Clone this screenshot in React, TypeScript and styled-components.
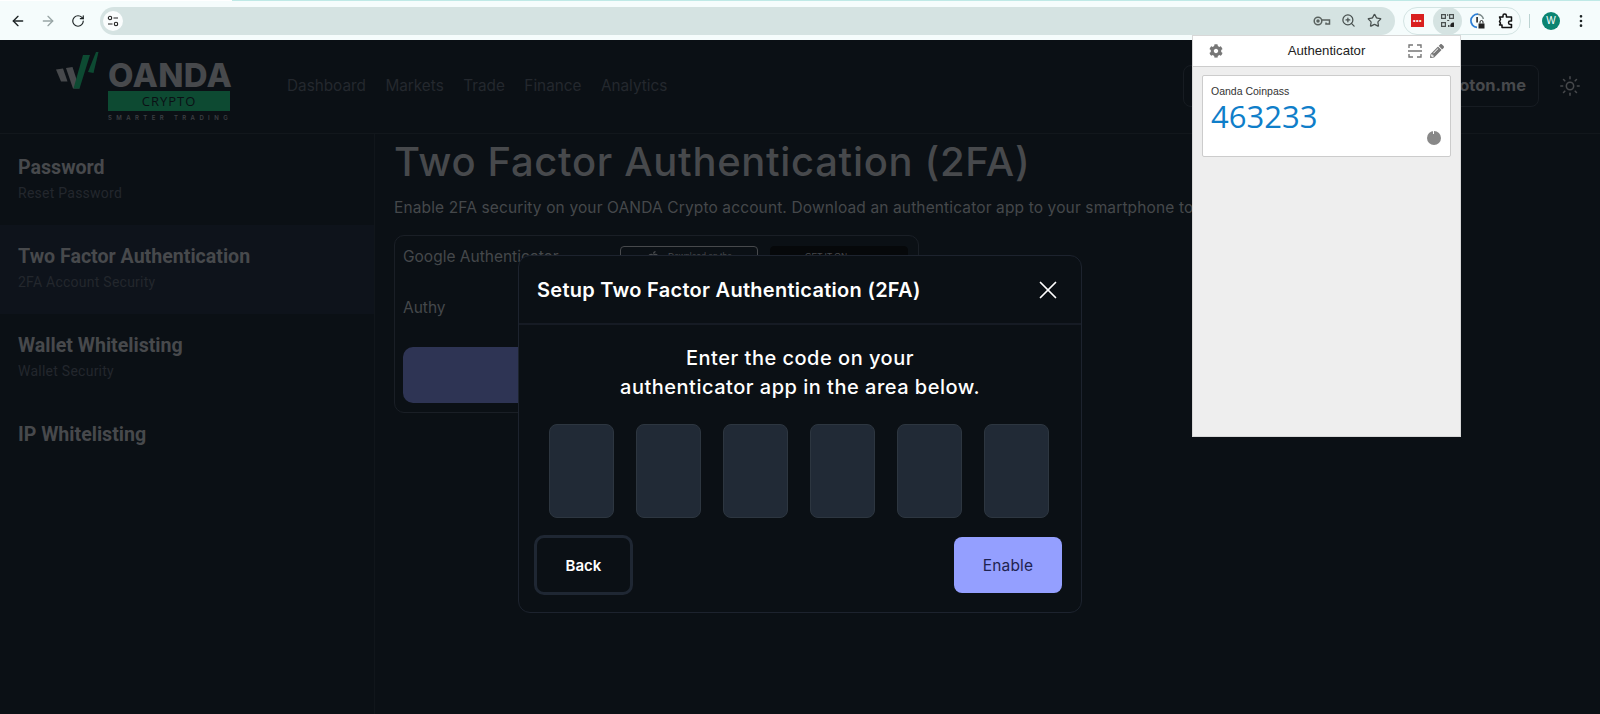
import styled, { createGlobalStyle } from "styled-components";
import { ArrowLeft, ArrowRight, RotateCw, ZoomIn, Star, EllipsisVertical, Sun, X } from "lucide-react";
import { FaApple, FaCog, FaPencilAlt } from "react-icons/fa";

const GlobalStyle = createGlobalStyle`
  html, body {
    margin: 0;
    width: 1600px;
    height: 714px;
    overflow: hidden;
    background: #0b1015;
  }
  * { box-sizing: border-box; }
`;

const display = `"Inter", "Open Sans", sans-serif`;

const Shell = styled.div`
  display: flex;
  flex-direction: column;
  width: 1600px;
  height: 714px;
  position: relative;
  overflow: hidden;
`;

/* browser chrome */
const BrowserBar = styled.div`
  height: 40px;
  flex: none;
  display: flex;
  align-items: center;
  padding: 1px 0 0 7px;
  background: linear-gradient(to right, #fff 232px, #bfe9e6 232px) top / 100% 1px no-repeat, #f5fcfc;
`;

const NavButton = styled.div<{ $dim?: boolean }>`
  width: 22px;
  height: 22px;
  margin-right: 8px;
  display: flex;
  align-items: center;
  justify-content: center;
  color: ${({ $dim }) => ($dim ? "#98a5a5" : "#1c2324")};
`;

const AddressBar = styled.div`
  width: 1295px;
  height: 28px;
  margin-left: 3px;
  padding: 0 8px 0 3px;
  display: flex;
  align-items: center;
  border-radius: 14px;
  background: #d5e3e2;
  color: #48504f;
`;

const SiteChip = styled.div`
  width: 20px;
  height: 20px;
  border-radius: 50%;
  background: #fafdfd;
  display: flex;
  align-items: center;
  justify-content: center;
`;

const AddressIcons = styled.div`
  margin-left: auto;
  display: flex;
  align-items: center;
  gap: 8px;
  padding-right: 4px;
`;

const IconSlot = styled.div`
  width: 18px;
  height: 18px;
  display: flex;
  align-items: center;
  justify-content: center;
`;

const ExtensionPill = styled.div`
  width: 118px;
  height: 28px;
  margin-left: 8px;
  display: flex;
  align-items: center;
  border: 1px solid #d3e4e3;
  border-radius: 14px;
`;

const ExtensionSlot = styled.div<{ $active?: boolean }>`
  width: 29px;
  height: 28px;
  flex: none;
  display: flex;
  align-items: center;
  justify-content: center;
  border-radius: 50%;
  background: ${({ $active }) => ($active ? "#d5e3e2" : "transparent")};
`;

const RedExtension = styled.div`
  width: 13px;
  height: 13px;
  margin-right: 2px;
  background: #d9201f;
  display: flex;
  align-items: center;
  justify-content: center;
  color: #fff;
  font: 700 7px/1 "Liberation Sans", sans-serif;
  letter-spacing: 0.5px;
`;

const BarDivider = styled.div`
  width: 1px;
  height: 14px;
  margin: 0 12px 0 8px;
  background: #bcd3d2;
`;

const Avatar = styled.div`
  width: 18px;
  height: 18px;
  border-radius: 50%;
  background: #0b8471;
  color: #fff;
  display: flex;
  align-items: center;
  justify-content: center;
  font: 400 10px/1 "Liberation Sans", sans-serif;
`;

const MenuSlot = styled.div`
  margin-left: 13px;
  display: flex;
  color: #1c2324;
`;

/* page behind the dialog */
const Header = styled.header`
  height: 94px;
  flex: none;
  display: flex;
  align-items: center;
  padding-left: 56px;
  border-bottom: 1px solid #12171c;
`;

const Logo = styled.div`
  width: 174px;
  display: flex;
  align-items: flex-start;
  gap: 4px;
`;

const LogoWords = styled.div`
  width: 122px;
  display: flex;
  flex-direction: column;
  margin-top: 11px;
`;

const LogoName = styled.div`
  font: 800 33px/27px ${display};
  color: #47494c;
  letter-spacing: 0.4px;
  white-space: nowrap;
`;

const LogoBand = styled.div`
  height: 20px;
  margin-top: 2px;
  background: #0d4a32;
  color: #0b1015;
  text-align: center;
  font: 400 13px/20px "Open Sans", sans-serif;
  letter-spacing: 1px;
`;

const LogoTag = styled.div`
  margin-top: 3px;
  font: 600 6px/8px ${display};
  letter-spacing: 4.4px;
  color: #3c3f43;
  white-space: nowrap;
`;

const Nav = styled.nav`
  margin-left: 57px;
  display: flex;
  gap: 19.5px;
  margin-top: -2px;
`;

const NavLink = styled.span`
  font: 400 15.3px/22px ${display};
  color: #24282e;
`;

const HeaderRight = styled.div`
  margin-left: auto;
  display: flex;
  align-items: center;
  margin-top: -2px;
`;

const UserBox = styled.div`
  width: 356px;
  height: 42px;
  padding-right: 12px;
  display: flex;
  align-items: center;
  justify-content: flex-end;
  border: 1px solid #171c22;
  border-radius: 8px;
  font: 700 16.5px/1 ${display};
  color: #47494c;
`;

const ThemeToggle = styled.div`
  width: 61px;
  display: flex;
  justify-content: center;
  color: #47494c;
`;

const Body = styled.div`
  flex: 1;
  display: flex;
`;

const Sidebar = styled.aside`
  width: 375px;
  flex: none;
  padding-top: 2px;
  border-right: 1px solid #11161b;
`;

const SideItem = styled.div<{ $active?: boolean }>`
  height: 89px;
  padding: 20px 18px 0;
  background: ${({ $active }) => ($active ? "#0e131b" : "transparent")};
`;

const SideTitle = styled.div`
  font: 700 19.6px/24px Roboto, sans-serif;
  color: #47494c;
`;

const SideSub = styled.div`
  margin-top: 3px;
  font: 400 14px/20px Roboto, sans-serif;
  letter-spacing: 0.25px;
  color: #23272d;
`;

const Main = styled.main`
  flex: 1;
  min-width: 0;
  padding-left: 19px;
`;

const PageTitle = styled.h1`
  margin: 0;
  font: 500 40px/56px ${display};
  letter-spacing: 0.67px;
  color: #47494c;
  white-space: nowrap;
`;

const PageLead = styled.p`
  margin: 6px 0 0;
  font: 400 15.5px/24px ${display};
  letter-spacing: 0.13px;
  color: #45484b;
  white-space: nowrap;
`;

const AppsCard = styled.section`
  width: 525px;
  height: 178px;
  margin-top: 15px;
  padding: 10px 8px;
  border: 1px solid #1a1f26;
  border-radius: 10px;
`;

const AppRow = styled.div<{ $height: number }>`
  height: ${({ $height }) => $height}px;
  display: flex;
  align-items: flex-start;
  gap: 12px;
`;

const AppName = styled.div`
  width: 205px;
  font: 400 15.5px/22px ${display};
  color: #45484b;
`;

const StoreBadge = styled.div<{ $dark?: boolean }>`
  width: 138px;
  height: 42px;
  padding: 3px ${({ $dark }) => ($dark ? "26px" : "0")} 0 0;
  display: flex;
  justify-content: center;
  gap: 8px;
  border: 1px solid ${({ $dark }) => ($dark ? "#06080a" : "#47494c")};
  border-radius: 4px;
  background: ${({ $dark }) => ($dark ? "#06080a" : "#0b1015")};
  color: #47494c;
  font: 400 8.5px/12px "Liberation Sans", sans-serif;
`;

const GhostButton = styled.div`
  height: 56px;
  border-radius: 10px;
  background: #2e3454;
`;

/* dialog */
const Modal = styled.section`
  position: absolute;
  left: 518px;
  top: 255px;
  width: 564px;
  height: 358px;
  border: 1px solid #1d232e;
  border-radius: 12px;
  background: #0b1015;
`;

const ModalHead = styled.div`
  height: 69px;
  padding: 0 18px 0 18px;
  display: flex;
  align-items: center;
  justify-content: space-between;
  border-bottom: 2px solid #161b24;
`;

const ModalTitle = styled.h2`
  margin: 0;
  font: 600 20px/1 ${display};
  letter-spacing: 0.28px;
  color: #fff;
`;

const CloseButton = styled.div`
  display: flex;
  color: #fff;
`;

const Prompt = styled.p`
  margin: 19px 0 0;
  text-align: center;
  font: 500 20px/29px ${display};
  letter-spacing: 0.5px;
  color: #fff;
`;

const CodeRow = styled.div`
  margin-top: 22px;
  display: flex;
  justify-content: center;
  gap: 21.7px;
  padding-right: 2px;
`;

const CodeCell = styled.div`
  width: 65.4px;
  height: 94px;
  border: 1px solid #2d3640;
  border-radius: 8px;
  background: #212a36;
`;

const ModalFoot = styled.div`
  margin-top: 17px;
  padding: 0 19px 0 15px;
  display: flex;
  align-items: center;
  justify-content: space-between;
`;

const BackButton = styled.div`
  width: 99px;
  height: 60px;
  display: flex;
  align-items: center;
  justify-content: center;
  border: 3px solid #1f2733;
  border-radius: 10px;
  font: 600 15px/1 ${display};
  color: #fff;
`;

const EnableButton = styled.div`
  width: 108px;
  height: 56px;
  padding-top: 1px;
  display: flex;
  align-items: center;
  justify-content: center;
  border-radius: 8px;
  background: #949fff;
  font: 400 15.5px/1 ${display};
  letter-spacing: 0.2px;
  color: #1f2350;
`;

/* extension popup */
const Popup = styled.section`
  position: absolute;
  left: 1192px;
  top: 35px;
  width: 269px;
  height: 402px;
  display: flex;
  flex-direction: column;
  border: 1px solid #d8d8d8;
  background: #eeeeee;
`;

const PopupHead = styled.div`
  height: 31px;
  flex: none;
  padding: 0 16px;
  display: grid;
  grid-template-columns: 1fr auto 1fr;
  align-items: center;
  border-bottom: 1px solid #cccccc;
  background: #fff;
  color: #777;
`;

const PopupTitle = styled.div`
  font: 400 13.2px/1 "Liberation Sans", sans-serif;
  color: #222;
`;

const PopupTools = styled.div`
  display: flex;
  align-items: center;
  justify-content: flex-end;
  gap: 8px;
`;

const TokenCard = styled.div`
  height: 82px;
  margin: 8px 9px;
  padding: 8px;
  position: relative;
  border: 1px solid #cccccc;
  border-radius: 2px;
  background: #fff;
`;

const TokenIssuer = styled.div`
  font: 400 10.5px/14px "Liberation Sans", sans-serif;
  color: #333;
`;

const TokenCode = styled.div`
  font: 400 31px/36px "Open Sans", sans-serif;
  color: #0f7ec9;
`;

const TokenTimer = styled.div`
  position: absolute;
  right: 9px;
  bottom: 11px;
  width: 14px;
  height: 14px;
  border-radius: 50%;
  background: conic-gradient(#888 0 98%, #fff 98%);
`;

const TuneIcon = () => (
  <svg width="12" height="12" viewBox="0 0 12 12" fill="none" stroke="#222" strokeWidth="1.1">
    <circle cx="3" cy="3" r="1.7" />
    <path d="M6.5 3H11M1 9h4.5" />
    <circle cx="9" cy="9" r="1.7" />
  </svg>
);

const KeyIcon = () => (
  <svg width="18" height="12" viewBox="0 0 18 12" fill="none" stroke="#59625f" strokeWidth="1.5">
    <circle cx="5" cy="6" r="3.8" />
    <circle cx="5" cy="6" r="1" fill="#59625f" />
    <path d="M9 5h7.5v4H13V7.5" />
  </svg>
);

const QrIcon = () => (
  <svg width="15" height="15" viewBox="0 0 15 15" fill="#4a504f">
    <path d="M1 1h5v5H1zM2.200 2.200v2.600h2.600V2.200zM9 1h5v5H9zM10.200 2.200v2.600h2.600V2.200zM1 9h5v5H1zM2.200 10.200v2.600h2.600v-2.600z" fillRule="evenodd" />
    <path d="M7.200 1h1v2h-1zM7.200 7h2v1h-2zM8 12h1.500v2H8z" />
    <path d="M10.500 14a3.200 3.200 0 0 1 3.500-4.500V14z" fill="#222" />
  </svg>
);

const TimerLockIcon = () => (
  <svg width="18" height="18" viewBox="0 0 18 18" fill="none">
    <path d="M10 2.200A6.600 6.600 0 1 0 9 15.400" stroke="#2c7fd6" strokeWidth="1.7" />
    <path d="M10 2.200A6.600 6.600 0 0 1 15.400 7" stroke="#7c8a8a" strokeWidth="1.5" />
    <path d="M8.300 5h1.600v5.500H8.300z" fill="#222" />
    <rect x="10.500" y="11.500" width="6" height="5" fill="#222" />
    <path d="M12 11.500V10a1.500 1.500 0 0 1 3 0v1.500" stroke="#222" strokeWidth="1" />
  </svg>
);

const PuzzleIcon = () => (
  <svg width="18" height="18" viewBox="0 0 18 18" fill="none" stroke="#111" strokeWidth="1.5" strokeLinejoin="round">
    <path d="M2.500 5H6V3.600a1.700 1.700 0 0 1 3.400 0V5h5.100v4h-1.300a1.700 1.700 0 0 0 0 3.400h1.300V15.500H5v-2.400H2.500l1-2-1-1.600 1-2z" />
  </svg>
);

const LogoMark = () => (
  <svg width="48" height="50" viewBox="0 0 48 50">
    <path d="M0 18.500l7-1 4.500 13H5z" fill="#47494c" />
    <path d="M10 17l6.500-1 7 21.500H17z" fill="#47494c" />
    <path d="M17.500 37.500L27 4h7l-10.500 33.500z" fill="#0d4a32" />
    <path d="M32 21l8-20h2.500l-5 21z" fill="#0d4a32" />
  </svg>
);

const ScanIcon = () => (
  <svg width="14" height="14" viewBox="0 0 14 14" fill="none" stroke="#777" strokeWidth="1.4">
    <path d="M1 4V1h4M9 1h4v3M1 10v3h4M9 13h4v-3M0 7h14" />
  </svg>
);

const sideItems = [
  { title: "Password", sub: "Reset Password" },
  { title: "Two Factor Authentication", sub: "2FA Account Security", active: true },
  { title: "Wallet Whitelisting", sub: "Wallet Security" },
  { title: "IP Whitelisting" },
];

const navItems = ["Dashboard", "Markets", "Trade", "Finance", "Analytics"];

export default function App() {
  return (
    <Shell>
      <GlobalStyle />
      <BrowserBar>
        <NavButton><ArrowLeft size={16} strokeWidth={2} /></NavButton>
        <NavButton $dim><ArrowRight size={16} strokeWidth={2} /></NavButton>
        <NavButton><RotateCw size={14} strokeWidth={2} /></NavButton>
        <AddressBar>
          <SiteChip><TuneIcon /></SiteChip>
          <AddressIcons>
            <IconSlot><KeyIcon /></IconSlot>
            <IconSlot><ZoomIn size={15} /></IconSlot>
            <IconSlot><Star size={15} /></IconSlot>
          </AddressIcons>
        </AddressBar>
        <ExtensionPill>
          <ExtensionSlot><RedExtension>•••</RedExtension></ExtensionSlot>
          <ExtensionSlot $active><QrIcon /></ExtensionSlot>
          <ExtensionSlot><TimerLockIcon /></ExtensionSlot>
          <ExtensionSlot><PuzzleIcon /></ExtensionSlot>
        </ExtensionPill>
        <BarDivider />
        <Avatar>W</Avatar>
        <MenuSlot><EllipsisVertical size={16} /></MenuSlot>
      </BrowserBar>

      <Header>
        <Logo>
          <LogoMark />
          <LogoWords>
            <LogoName>OANDA</LogoName>
            <LogoBand>CRYPTO</LogoBand>
            <LogoTag>SMARTER TRADING</LogoTag>
          </LogoWords>
        </Logo>
        <Nav>
          {navItems.map((item) => (
            <NavLink key={item}>{item}</NavLink>
          ))}
        </Nav>
        <HeaderRight>
          <UserBox>proton.me</UserBox>
          <ThemeToggle><Sun size={22} strokeWidth={1.7} /></ThemeToggle>
        </HeaderRight>
      </Header>

      <Body>
        <Sidebar>
          {sideItems.map((item) => (
            <SideItem key={item.title} $active={item.active}>
              <SideTitle>{item.title}</SideTitle>
              {item.sub && <SideSub>{item.sub}</SideSub>}
            </SideItem>
          ))}
        </Sidebar>
        <Main>
          <PageTitle>Two Factor Authentication (2FA)</PageTitle>
          <PageLead>
            Enable 2FA security on your OANDA Crypto account. Download an authenticator app to your smartphone to
          </PageLead>
          <AppsCard>
            <AppRow $height={51}>
              <AppName>Google Authenticator</AppName>
              <StoreBadge><FaApple size={14} /> Download on the</StoreBadge>
              <StoreBadge $dark>GET IT ON</StoreBadge>
            </AppRow>
            <AppRow $height={50}>
              <AppName>Authy</AppName>
            </AppRow>
            <GhostButton />
          </AppsCard>
        </Main>
      </Body>

      <Modal>
        <ModalHead>
          <ModalTitle>Setup Two Factor Authentication (2FA)</ModalTitle>
          <CloseButton><X size={30} strokeWidth={1.4} /></CloseButton>
        </ModalHead>
        <Prompt>
          Enter the code on your
          <br />
          authenticator app in the area below.
        </Prompt>
        <CodeRow>
          {[0, 1, 2, 3, 4, 5].map((cell) => (
            <CodeCell key={cell} />
          ))}
        </CodeRow>
        <ModalFoot>
          <BackButton>Back</BackButton>
          <EnableButton>Enable</EnableButton>
        </ModalFoot>
      </Modal>

      <Popup>
        <PopupHead>
          <FaCog size={14} />
          <PopupTitle>Authenticator</PopupTitle>
          <PopupTools>
            <ScanIcon />
            <FaPencilAlt size={14} />
          </PopupTools>
        </PopupHead>
        <TokenCard>
          <TokenIssuer>Oanda Coinpass</TokenIssuer>
          <TokenCode>463233</TokenCode>
          <TokenTimer />
        </TokenCard>
      </Popup>
    </Shell>
  );
}
